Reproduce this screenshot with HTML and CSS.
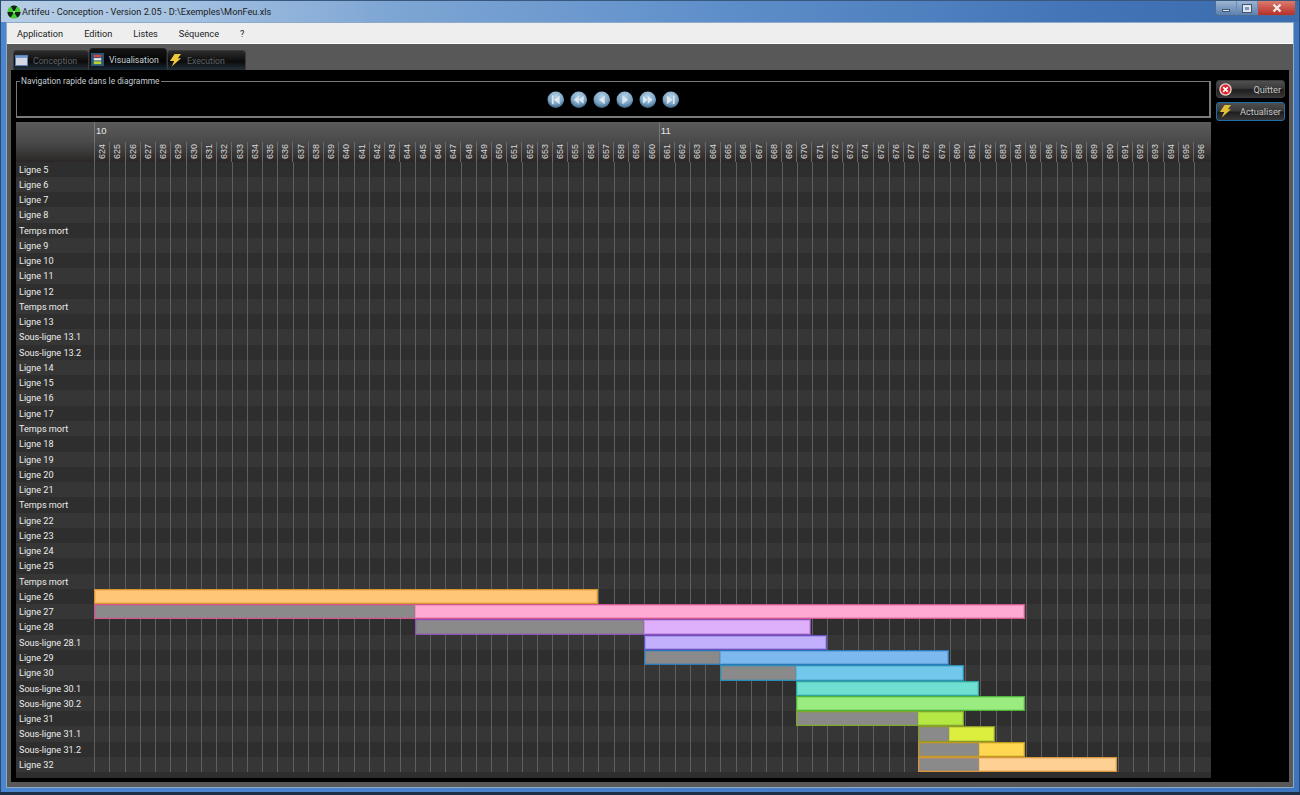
FILE: index.html
```html
<!DOCTYPE html>
<html lang="fr">
<head>
    <meta charset="UTF-8">
    <title>Artifeu - Conception - Version 2.05</title>
    <link rel="stylesheet" href="styles.css">
</head>
<body>
    <div class="window">
        <div class="titlebar">
            <svg class="app-icon" viewBox="0 0 16 16">
                <circle cx="8" cy="8" r="7.5" fill="#45c836"/>
                <path d="M8 8 L4.5 1.5 A7.4 7.4 0 0 1 11.5 1.5 Z" fill="#14201a"/>
                <path d="M8 8 L15.4 8 A7.4 7.4 0 0 1 11.7 14.4 Z" fill="#14201a"/>
                <path d="M8 8 L4.3 14.4 A7.4 7.4 0 0 1 0.6 8 Z" fill="#14201a"/>
                <circle cx="8" cy="8" r="1.4" fill="#8be070"/>
            </svg>
            <span class="title-text">Artifeu - Conception - Version 2.05 - D:\Exemples\MonFeu.xls</span>
            <div class="win-controls">
                <div class="win-btn"><span class="min-glyph"></span></div>
                <div class="win-btn"><span class="max-glyph"></span></div>
                <div class="win-btn win-close">
                    <svg viewBox="0 0 10 10" width="10" height="10"><path d="M1.5 1.5 L8.5 8.5 M8.5 1.5 L1.5 8.5" stroke="#f2eeee" stroke-width="2.2"/></svg>
                </div>
            </div>
        </div>

        <div class="client">
            <div class="menubar">
                <span class="menu-item">Application</span>
                <span class="menu-item">Edition</span>
                <span class="menu-item">Listes</span>
                <span class="menu-item">Séquence</span>
                <span class="menu-item">?</span>
            </div>

            <div class="workspace">
                <div class="tabs">
                    <div class="tab tab-first">
                        <svg class="tab-icon" viewBox="0 0 14 14">
                            <rect x="0.5" y="1.5" width="13" height="11" fill="#d3d8e2" stroke="#5a7fb5"/>
                            <rect x="1" y="2" width="12" height="2.2" fill="#6f97cf"/>
                        </svg>
                        <span>Conception</span>
                    </div>
                    <div class="tab tab-active">
                        <svg class="tab-icon" viewBox="0 0 14 14">
                            <rect x="0" y="0" width="14" height="14" fill="#2b5578"/>
                            <rect x="3" y="2" width="8" height="2.5" fill="#d9483a"/>
                            <rect x="3" y="5.5" width="8" height="2.5" fill="#e8e8e8"/>
                            <rect x="3" y="9" width="8" height="3" fill="#b6d32f"/>
                        </svg>
                        <span>Visualisation</span>
                    </div>
                    <div class="tab tab-last">
                        <svg class="tab-icon" viewBox="0 0 14 14">
                            <path d="M6 0 L13 0 L9.5 4.5 L13 4.5 L3 13.5 L5.5 7.5 L1 7.5 Z" fill="#eec93a"/>
                        </svg>
                        <span>Execution</span>
                    </div>
                </div>

                <div class="panel">
                    <div class="main-col">
                        <fieldset class="nav-group">
                            <legend>Navigation rapide dans le diagramme</legend>
                            <div class="nav-buttons">
                                <svg class="nav-btn" viewBox="0 0 18 18"><use href="#orb"/><path d="M5 4.5 h1.8 v9 H5 Z M13 4.5 v9 L7 9 Z" fill="#dce8f0"/></svg>
                                <svg class="nav-btn" viewBox="0 0 18 18"><use href="#orb"/><path d="M9 5 v8 L4 9 Z M14 5 v8 L9 9 Z" fill="#dce8f0"/></svg>
                                <svg class="nav-btn" viewBox="0 0 18 18"><use href="#orb"/><path d="M12 4.5 v9 L6 9 Z" fill="#dce8f0"/></svg>
                                <svg class="nav-btn" viewBox="0 0 18 18"><use href="#orb"/><path d="M6.5 4.5 v9 L12.5 9 Z" fill="#dce8f0"/></svg>
                                <svg class="nav-btn" viewBox="0 0 18 18"><use href="#orb"/><path d="M4 5 v8 L9 9 Z M9 5 v8 L14 9 Z" fill="#dce8f0"/></svg>
                                <svg class="nav-btn" viewBox="0 0 18 18"><use href="#orb"/><path d="M5 4.5 v9 L11 9 Z M11.2 4.5 H13 v9 h-1.8 Z" fill="#dce8f0"/></svg>
                            </div>
                        </fieldset>

                        <div class="diagram">
                            <div class="diagram-head" id="head"></div>
                            <div class="diagram-body" id="body"></div>
                        </div>
                    </div>

                    <div class="side-col">
                        <div class="action-btn">
                            <svg class="action-icon" viewBox="0 0 14 14">
                                <circle cx="7" cy="7" r="6" fill="#d8242c" stroke="#f6d4d4" stroke-width="1.4"/>
                                <path d="M4.5 4.5 L9.5 9.5 M9.5 4.5 L4.5 9.5" stroke="#fff" stroke-width="1.8"/>
                            </svg>
                            <span>Quitter</span>
                        </div>
                        <div class="action-btn action-focus">
                            <svg class="action-icon" viewBox="0 0 14 14">
                                <path d="M6 0 L13 0 L9.5 4.5 L13 4.5 L3 13.5 L5.5 7.5 L1 7.5 Z" fill="#e3bd35"/>
                            </svg>
                            <span>Actualiser</span>
                        </div>
                    </div>
                </div>
            </div>
        </div>
    </div>

    <svg class="defs" width="0" height="0">
        <defs>
            <radialGradient id="orbFill" cx="50%" cy="30%" r="75%">
                <stop offset="0" stop-color="#b4d0e4"/>
                <stop offset="0.6" stop-color="#7aa3c4"/>
                <stop offset="1" stop-color="#2c5476"/>
            </radialGradient>
            <circle id="orb" cx="9" cy="9" r="8.5" fill="url(#orbFill)"/>
        </defs>
    </svg>

    <script src="app.js"></script>
</body>
</html>
```

FILE: styles.css
```css
* {
    box-sizing: border-box;
}
html, body {
    margin: 0;
    height: 100%;
    overflow: hidden;
}
body {
    font-family: Roboto, sans-serif;
    font-size: 9.1px;
    background-color: #1c2f47;
}
.defs {
    position: absolute;
}
.window {
    height: 792px;
    display: flex;
    flex-direction: column;
    padding: 0 5px 4px 5px;
    background: linear-gradient(90deg, #4d86d0 0%, #4a80c8 50%, #3f74bf 100%);
    border-left: 1px solid #2a4a70;
    border-right: 1px solid #2a4a70;
}

/* title bar */
.titlebar {
    height: 22px;
    margin: 0 -5px;
    padding-left: 6px;
    display: flex;
    align-items: center;
    gap: 1px;
    background: linear-gradient(90deg, #b6cde4 0%, #a8c4e2 12%, #7ea6d4 30%, #5f8fca 55%, #4173b5 85%, #3a6cae 100%);
    border-top: 1px solid #39587e;
}
.app-icon {
    width: 14px;
    height: 14px;
    flex-shrink: 0;
}
.title-text {
    font-size: 9.2px;
    color: #1b1b1b;
}
.win-controls {
    margin-left: auto;
    margin-right: 3px;
    align-self: flex-start;
    display: flex;
    height: 15px;
    border: 1px solid #4d6c93;
    border-top: none;
    border-radius: 0 0 4px 4px;
    overflow: hidden;
}
.win-btn {
    width: 21px;
    display: flex;
    align-items: center;
    justify-content: center;
    background: linear-gradient(#9db5d2, #5a80b0);
    border-right: 1px solid #6b8bb3;
}
.win-close {
    width: 37px;
    border-right: none;
    background: linear-gradient(#dc7a6e, #b5302a);
}
.min-glyph {
    width: 8px;
    height: 3px;
    margin-top: 5px;
    background: #dfe6ee;
    border: 1px solid #44566d;
}
.max-glyph {
    width: 8px;
    height: 7px;
    border: 2px solid #dfe6ee;
    outline: 1px solid #44566d;
}

/* client area */
.client {
    flex: 1;
    display: flex;
    flex-direction: column;
    min-height: 0;
    border: 1px solid #8eaac9;
}
.menubar {
    height: 21px;
    display: flex;
    align-items: center;
    padding-left: 10px;
    gap: 21px;
    font-size: 9.2px;
    background-color: #eeeeee;
    border-bottom: 1px solid #fff;
    color: #222;
}
.workspace {
    flex: 1;
    min-height: 0;
    display: flex;
    flex-direction: column;
    padding: 6px 4px 5px 4px;
    background-color: #585858;
}

/* tabs */
.tabs {
    height: 20px;
    display: flex;
    padding-left: 2px;
    flex-shrink: 0;
    font-size: 8.7px;
}
.tab {
    display: flex;
    align-items: center;
    gap: 5px;
    padding-left: 1px;
    color: #5f6468;
    border-radius: 4px 4px 0 0;
    background: linear-gradient(#2c2c2c, #0c0c0c 55%, #22303a);
    border: 1px solid #3a3a3a;
    border-bottom: none;
}
.tab-first {
    width: 76px;
}
.tab-active {
    width: 78px;
    color: #c6d3dc;
    background: linear-gradient(#141414, #050505 60%, #1a2a38);
    margin-top: -2px;
    border-color: #222;
}
.tab-last {
    width: 79px;
}
.tab-icon {
    width: 13px;
    height: 13px;
    flex-shrink: 0;
}

/* main black panel */
.panel {
    flex: 1;
    min-height: 0;
    display: flex;
    gap: 5px;
    padding: 7px 0 0 5px;
    background-color: #000;
}
.main-col {
    width: 1195px;
    display: flex;
    flex-direction: column;
}
.nav-group {
    height: 41px;
    margin: 0;
    padding: 0;
    border: 1px solid #7a7a7a;
    border-width: 1px 2px 2px 1px;
}
.nav-group legend {
    margin-left: 3px;
    padding: 0 1px;
    font-size: 8.4px;
    line-height: 9px;
    color: #c4ced4;
}
.nav-buttons {
    display: flex;
    justify-content: center;
    gap: 5.5px;
    padding-top: 5px;
}
.nav-btn {
    width: 17.5px;
    height: 17.5px;
}

/* diagram */
.diagram {
    height: 656px;
    margin-top: 4px;
    display: flex;
    flex-direction: column;
    background-color: #2e2e2e;
    flex-shrink: 0;
}
.diagram-head {
    height: 39.5px;
    display: grid;
    grid-template-columns: 78px repeat(73, 15.28px);
    grid-template-rows: 20px 19.5px;
    background: linear-gradient(#5a5a5a, #4a4a4a 50%, #2b2626);
}
.head-corner {
    grid-row: 1 / 3;
}
.head-group {
    grid-row: 1;
    padding-left: 1px;
    line-height: 17px;
    font-family: "Liberation Sans", sans-serif;
    font-size: 9.5px;
    color: #e6e6e6;
    border-left: 1px solid #777;
}
.head-num {
    grid-row: 2;
    display: flex;
    justify-content: center;
    align-items: center;
    border-left: 1px solid #6a6a6a;
}
.head-num span {
    writing-mode: vertical-rl;
    transform: rotate(180deg);
    font-family: "Liberation Sans", sans-serif;
    font-size: 9px;
    color: #d8d8d8;
}
.row {
    height: 15.27px;
    display: grid;
    grid-template-columns: 78px 1115.44px;
    grid-template-rows: 15.27px;
    background-color: #2e2e2e;
}
.row:nth-child(even) {
    background-color: #363636;
}
.row-label {
    padding-left: 3px;
    line-height: 17px;
    color: #ececec;
    white-space: nowrap;
}
.row-track {
    display: grid;
    grid-template-columns: repeat(73, 15.28px);
    background-image: repeating-linear-gradient(90deg, #5f5f5f 0, #5f5f5f 1px, transparent 1px, transparent 15.28px);
}
.bar {
    display: flex;
    border: 1px solid #888;
}
.bar-wait, .bar-fill {
    box-shadow: inset 0 0 0 1px color-mix(in srgb, currentColor 30%, transparent);
}
.bar-wait {
    background-color: #8a8a8a;
}
.bar-fill {
    flex: 1;
}

/* right side buttons */
.side-col {
    width: 69px;
    padding-top: 3px;
    display: flex;
    flex-direction: column;
    gap: 4px;
    font-size: 9.2px;
}
.action-btn {
    height: 18px;
    display: flex;
    align-items: center;
    justify-content: space-between;
    padding: 0 3px 0 2px;
    color: #c9c9c9;
    border: 1px solid #3c3c3c;
    border-radius: 3px;
    background: linear-gradient(#4f4f4f, #3a3a3a 45%, #1e1e1e 55%, #383838);
}
.action-focus {
    height: 19px;
    border-color: #1f6ea8;
}
.action-icon {
    width: 13px;
    height: 13px;
    flex-shrink: 0;
}
```

FILE: app.js
```js
const firstColumn = 624;
const lastColumn = 696;
const columnWidth = 15.28;
const groups = { 624: '10', 661: '11' };

const rows = [
    ['Ligne 5'], ['Ligne 6'], ['Ligne 7'], ['Ligne 8'], ['Temps mort'],
    ['Ligne 9'], ['Ligne 10'], ['Ligne 11'], ['Ligne 12'], ['Temps mort'],
    ['Ligne 13'], ['Sous-ligne 13.1'], ['Sous-ligne 13.2'], ['Ligne 14'],
    ['Ligne 15'], ['Ligne 16'], ['Ligne 17'], ['Temps mort'], ['Ligne 18'],
    ['Ligne 19'], ['Ligne 20'], ['Ligne 21'], ['Temps mort'], ['Ligne 22'],
    ['Ligne 23'], ['Ligne 24'], ['Ligne 25'], ['Temps mort'],
    // label, start, wait columns, fill columns, fill colour, border colour
    ['Ligne 26', 0, 0, 33, '#ffc677', '#d9962f'],
    ['Ligne 27', 0, 21, 40, '#ffaad2', '#d2558f'],
    ['Ligne 28', 21, 15, 11, '#deb0fb', '#9050b8'],
    ['Sous-ligne 28.1', 36, 0, 12, '#c2b0fd', '#6a4fc0'],
    ['Ligne 29', 36, 5, 15, '#7db8ee', '#2a78b8'],
    ['Ligne 30', 41, 5, 11, '#72c8ea', '#2c8fb5'],
    ['Sous-ligne 30.1', 46, 0, 12, '#70e0d2', '#2fa79c'],
    ['Sous-ligne 30.2', 46, 0, 15, '#9aec80', '#4fb53a'],
    ['Ligne 31', 46, 8, 3, '#b5e845', '#7fa82a'],
    ['Sous-ligne 31.1', 54, 2, 3, '#dcef3f', '#8f9a2a'],
    ['Sous-ligne 31.2', 54, 4, 3, '#ffd750', '#c09a20'],
    ['Ligne 32', 54, 4, 9, '#ffd093', '#d8963f']
];

const head = document.getElementById('head');
const body = document.getElementById('body');

const corner = document.createElement('div');
corner.className = 'head-corner';
head.appendChild(corner);

// column numbers, with the group label above them
const groupStarts = Object.keys(groups).map(Number);
groupStarts.forEach((col, i) => {
    const group = document.createElement('div');
    group.className = 'head-group';
    group.textContent = groups[col];
    const next = groupStarts[i + 1] || lastColumn + 1;
    group.style.gridColumn = (col - firstColumn + 2) + ' / ' + (next - firstColumn + 2);
    head.appendChild(group);
});
for (let col = firstColumn; col <= lastColumn; col++) {
    const num = document.createElement('div');
    num.className = 'head-num';
    num.innerHTML = '<span>' + col + '</span>';
    head.appendChild(num);
}

rows.forEach(([label, start, wait, fill, color, border]) => {
    const row = document.createElement('div');
    row.className = 'row';

    const name = document.createElement('div');
    name.className = 'row-label';
    name.textContent = label;
    row.appendChild(name);

    const track = document.createElement('div');
    track.className = 'row-track';
    if (color) {
        const bar = document.createElement('div');
        bar.className = 'bar';
        bar.style.gridColumn = (start + 1) + ' / ' + (start + wait + fill + 1);
        bar.style.borderColor = border;
        bar.style.color = border;
        if (wait) {
            const w = document.createElement('div');
            w.className = 'bar-wait';
            w.style.flex = '0 0 ' + (wait * columnWidth - 1) + 'px';
            bar.appendChild(w);
        }
        const f = document.createElement('div');
        f.className = 'bar-fill';
        f.style.backgroundColor = color;
        bar.appendChild(f);
        track.appendChild(bar);
    }
    row.appendChild(track);
    body.appendChild(row);
});
```
